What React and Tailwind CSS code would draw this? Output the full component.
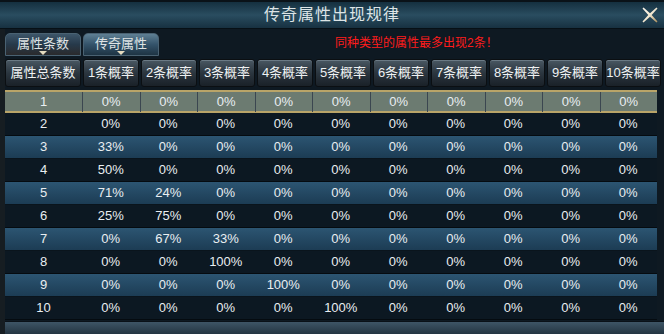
const headers = ["1条概率", "2条概率", "3条概率", "4条概率", "5条概率", "6条概率", "7条概率", "8条概率", "9条概率", "10条概率"];

const rows = [
  ["1", "0%", "0%", "0%", "0%", "0%", "0%", "0%", "0%", "0%", "0%"],
  ["2", "0%", "0%", "0%", "0%", "0%", "0%", "0%", "0%", "0%", "0%"],
  ["3", "33%", "0%", "0%", "0%", "0%", "0%", "0%", "0%", "0%", "0%"],
  ["4", "50%", "0%", "0%", "0%", "0%", "0%", "0%", "0%", "0%", "0%"],
  ["5", "71%", "24%", "0%", "0%", "0%", "0%", "0%", "0%", "0%", "0%"],
  ["6", "25%", "75%", "0%", "0%", "0%", "0%", "0%", "0%", "0%", "0%"],
  ["7", "0%", "67%", "33%", "0%", "0%", "0%", "0%", "0%", "0%", "0%"],
  ["8", "0%", "0%", "100%", "0%", "0%", "0%", "0%", "0%", "0%", "0%"],
  ["9", "0%", "0%", "0%", "100%", "0%", "0%", "0%", "0%", "0%", "0%"],
  ["10", "0%", "0%", "0%", "0%", "100%", "0%", "0%", "0%", "0%", "0%"],
];

const CloseIcon = () => (
  <svg width="16" height="16" viewBox="0 0 16 16">
    <defs>
      <linearGradient id="xg" x1="0" y1="0" x2="1" y2="1">
        <stop offset="0" stopColor="#fffaf0" />
        <stop offset="0.5" stopColor="#f2e8d2" />
        <stop offset="1" stopColor="#a88a58" />
      </linearGradient>
    </defs>
    <path d="M0.5 1.5 L1.5 0.5 L8 6.3 L14.5 0.5 L15.5 1.5 L9.7 8 L15.5 14.5 L14.5 15.5 L8 9.7 L1.5 15.5 L0.5 14.5 L6.3 8 Z" fill="url(#xg)" />
  </svg>
);

const Tab = ({ label, active }) => (
  <div
    className={
      "relative flex h-[23px] w-[76px] justify-center rounded-t-[5px] border border-[#4a6272] pt-[3px] text-[13px] leading-[14px] text-[#dfe3e4] " +
      (active
        ? "bg-gradient-to-b from-[#5f8094] via-[#34536a] to-[#1e3444]"
        : "bg-gradient-to-b from-[#3d566a] via-[#26394a] to-[#2a2a2c]")
    }
  >
    {label}
    <span className="absolute bottom-0 left-1/2 -translate-x-1/2 border-x-[4px] border-t-[4px] border-x-transparent border-t-[#e6dcc0]" />
  </div>
);

export default function App() {
  return (
    <div
      className="flex h-[334px] w-[664px] flex-col overflow-hidden bg-[#0e1922] text-[#e9eef1]"
      style={{ fontFamily: '"Liberation Sans", "Noto Sans CJK SC", sans-serif' }}
    >
      <div className="relative flex h-[29px] shrink-0 items-center justify-center border-t-2 border-b border-t-[#0a1218] border-b-[#071016] bg-gradient-to-b from-[#15303f] via-[#2a4d60] to-[#173141]">
        <span className="text-[16px] tracking-[1px] text-[#dde4e6]">传奇属性出现规律</span>
        <div className="absolute right-[6px] top-[5px]">
          <CloseIcon />
        </div>
      </div>

      <div className="flex flex-1 flex-col border-l-[5px] border-l-[#161d22]">
        <div className="mt-[4px] flex items-end gap-[2px]">
          <Tab label="属性条数" />
          <Tab label="传奇属性" active />
          <span className="ml-[174px] mb-[4px] text-[12px] text-[#ff1c1c]">同种类型的属性最多出现2条！</span>
        </div>

        <div className="mt-[3px] grid grid-cols-[76px_repeat(10,56px)] gap-x-[2px] w-[656px]">
          {["属性总条数", ...headers].map((h) => (
            <div
              key={h}
              className="flex h-[28px] items-center justify-center rounded-[3px] border border-[#0b0f12] bg-gradient-to-b from-[#4a5863] via-[#2b363f] to-[#1a2128] text-[13px] text-[#eef1f2] shadow-[inset_0_1px_0_#6b7a85]"
            >
              {h}
            </div>
          ))}
        </div>

        <div className="mt-[3px] w-[652px]">
          {rows.map((r, i) => {
            const cls =
              i === 0
                ? "h-[23px] border-y-2 border-y-[#b9a468] bg-[#6c7b71]"
                : i % 2 === 0
                ? "h-[23px] border-b border-b-[#0a141c] bg-gradient-to-b from-[#2c5572] to-[#1c3c54]"
                : "h-[23px] border-b border-b-[#050b10] bg-[#0c1822]";
            return (
              <div key={i} className={"grid grid-cols-[77px_repeat(10,1fr)] " + cls}>
                {r.map((c, j) => (
                  <div
                    key={j}
                    className={
                      "flex items-center justify-center text-[13px] " +
                      (i === 0 && j > 0 ? "border-l border-l-[#3b4650]" : "")
                    }
                  >
                    {c}
                  </div>
                ))}
              </div>
            );
          })}
        </div>

        <div className="mt-auto h-[13px] bg-gradient-to-b from-[#3e5566] to-[#243542] border-t border-t-[#0a1118]" />
      </div>
    </div>
  );
}
